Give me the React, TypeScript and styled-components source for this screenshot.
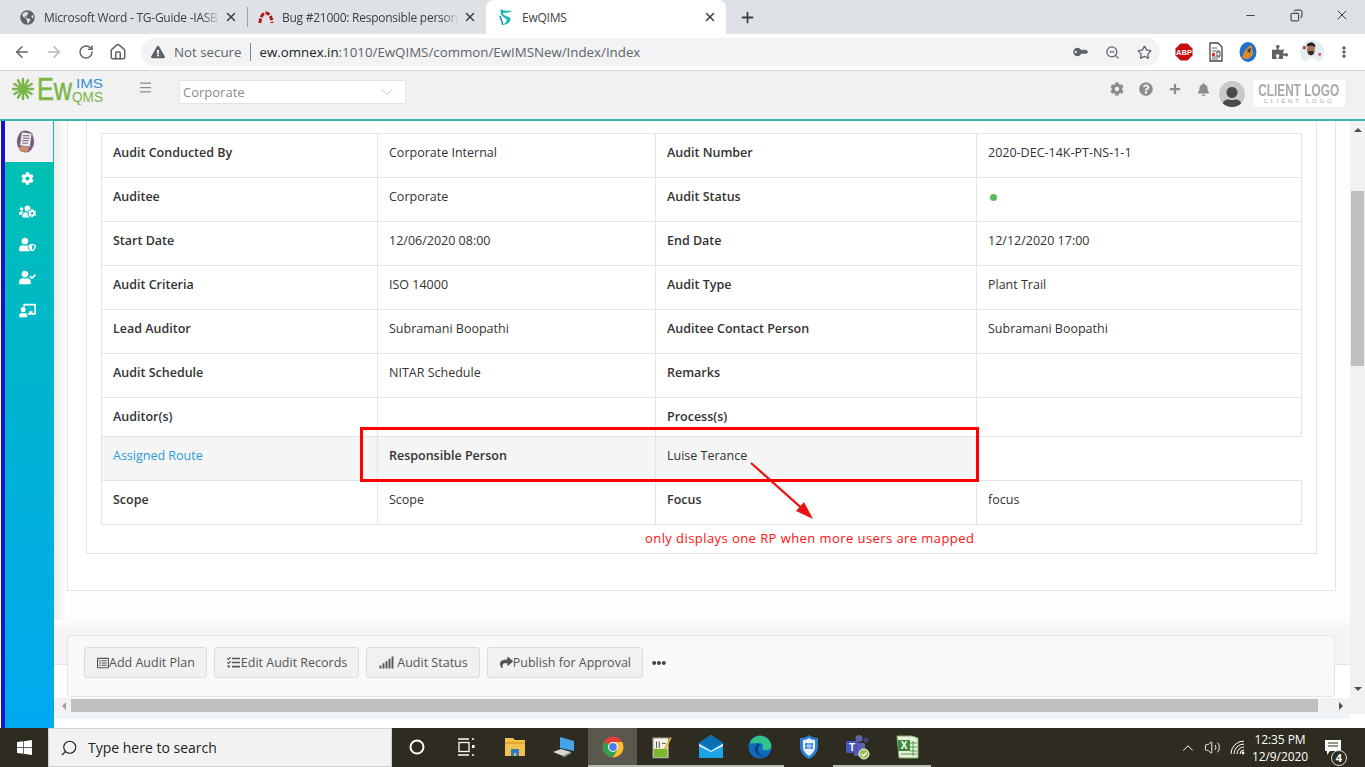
import React from 'react';
import styled, { createGlobalStyle } from 'styled-components';
import { ArrowLeft, ArrowRight, RotateCw, Home, X, Plus, Minus, Star, ZoomOut, Search, ChevronDown, ChevronUp, Menu, Copy, Volume2 } from 'lucide-react';
import {
  FaCog, FaQuestionCircle, FaPlus, FaBell, FaUsersCog, FaUserShield, FaUserCheck, FaChalkboardTeacher,
  FaTasks, FaSignal, FaShare, FaEllipsisH, FaRegListAlt, FaGlobeAmericas, FaKey, FaPuzzlePiece,
  FaExclamationTriangle, FaEllipsisV, FaUser, FaWindows,
} from 'react-icons/fa';

const GlobalStyle = createGlobalStyle`
  html, body {
    margin: 0;
    padding: 0;
    background: #fff;
    font-family: "Open Sans", "Liberation Sans", sans-serif;
  }
  * { box-sizing: border-box; }
`;

const Page = styled.div`
  width: 1365px;
  height: 767px;
  display: flex;
  flex-direction: column;
  overflow: hidden;
`;

/* browser chrome */
const TabStrip = styled.div`
  height: 34px;
  flex: none;
  background: #dee1e6;
  display: flex;
  align-items: stretch;
  padding-left: 9px;
  color: #3c4043;
`;

const Tab = styled.div<{ $active?: boolean; $width: number }>`
  width: ${({ $width }) => $width}px;
  display: flex;
  align-items: center;
  padding: 0 9px 0 ${({ $active }) => ($active ? 12 : 10)}px;
  background: ${({ $active }) => ($active ? '#fff' : 'transparent')};
  border-radius: ${({ $active }) => ($active ? '8px 8px 0 0' : '0')};
`;

const TabTitle = styled.span<{ $fade?: boolean }>`
  flex: 1;
  min-width: 0;
  margin-left: 8px;
  font-size: 12px;
  letter-spacing: -0.25px;
  white-space: nowrap;
  ${({ $fade }) => ($fade ? 'mask-image: linear-gradient(to right, #000 90%, transparent 100%);' : '')}
`;

const TabDivider = styled.div`
  width: 1px;
  height: 20px;
  align-self: center;
  background: #9aa0a6;
`;

const NewTab = styled.div`
  width: 42px;
  display: flex;
  align-items: center;
  justify-content: center;
`;

const WindowControls = styled.div`
  margin-left: auto;
  display: flex;
  align-items: flex-start;
`;

const WindowButton = styled.div`
  width: 46px;
  height: 30px;
  display: flex;
  align-items: center;
  justify-content: center;
  color: #111;
`;

const Toolbar = styled.div`
  height: 37px;
  flex: none;
  background: #fff;
  border-bottom: 1px solid #d6d6d6;
  display: flex;
  align-items: center;
  padding: 0 6px;
`;

const NavButton = styled.div<{ $muted?: boolean }>`
  width: 32px;
  height: 28px;
  flex: none;
  display: flex;
  align-items: center;
  justify-content: center;
  color: ${({ $muted }) => ($muted ? '#b3b6ba' : '#5f6368')};
`;

const Omnibox = styled.div`
  width: 1019px;
  height: 28px;
  margin: 0 8px 0 7px;
  flex: none;
  background: #f1f3f4;
  border-radius: 14px;
  display: flex;
  align-items: center;
  padding-left: 10px;
  font-size: 13.3px;
  color: #5f6368;
`;

const NotSecure = styled.span`
  margin-left: 9px;
`;

const UrlDivider = styled.span`
  width: 1px;
  height: 18px;
  margin: 0 8px 0 9px;
  background: #80868b;
`;

const UrlHost = styled.span`
  color: #202124;
`;

const OmniActions = styled.div`
  margin-left: auto;
  display: flex;
`;

/* application header */
const AppHeader = styled.header`
  height: 50px;
  flex: none;
  background: #f1f1f1;
  border-bottom: 2px solid #38b5a6;
  display: flex;
  align-items: center;
  padding: 0 20px 0 12px;
`;

const LogoMark = styled.svg`
  flex: none;
  margin-bottom: 4px;
  overflow: visible;
`;

const MenuButton = styled.div`
  margin: 0 0 16px 34px;
  color: #8a8a8a;
  display: flex;
`;

const CompanySelect = styled.div`
  width: 227px;
  height: 24px;
  margin: 0 0 7px 26px;
  background: #fff;
  border: 1px solid #e4e4e4;
  color: #8c8c8c;
  font-size: 13px;
  display: flex;
  align-items: center;
  justify-content: space-between;
  padding: 0 8px 0 3px;
`;

const HeaderActions = styled.div`
  margin-left: auto;
  display: flex;
  align-items: center;
`;

const HeaderIcon = styled.div`
  width: 29px;
  height: 20px;
  margin-bottom: 12px;
  color: #8c8c8c;
  display: flex;
  align-items: center;
  justify-content: center;
`;

const Avatar = styled.div`
  width: 26px;
  height: 26px;
  margin: 0 0 2px 1px;
  border-radius: 50%;
  background: #c9c9c9;
  color: #4a4a4a;
  overflow: hidden;
  display: flex;
  align-items: flex-end;
  justify-content: center;
`;

const ClientLogo = styled.div`
  width: 92px;
  height: 27px;
  margin: 0 0 3px 8px;
  background: #fff;
  color: #a8a8a8;
  display: flex;
  flex-direction: column;
  align-items: center;
  justify-content: center;
  line-height: 1;
  font-family: "Liberation Sans", sans-serif;
`;

const ClientTitle = styled.span`
  font-size: 16px;
  font-weight: 700;
  line-height: 14px;
  transform: scaleX(0.74);
  white-space: nowrap;
`;

const ClientSub = styled.span`
  font-size: 6px;
  letter-spacing: 2.8px;
  white-space: nowrap;
`;

/* main area */
const Main = styled.div`
  flex: 1;
  min-height: 0;
  display: flex;
`;

const Sidebar = styled.nav`
  width: 54px;
  flex: none;
  display: flex;
  flex-direction: column;
  padding-left: 1px;
  background: #fff;
`;

const SidebarInner = styled.div`
  flex: 1;
  border-left: 4px solid #1414cc;
  background: linear-gradient(to bottom, #00c2ae 0%, #00b4d0 45%, #00a9f0 100%);
`;

const SidebarActive = styled.div`
  height: 41px;
  padding-right: 8px;
  background: #f3f3f3;
  border-right: 1px solid #16bfae;
  display: flex;
  align-items: center;
  justify-content: center;
`;

const SidebarItem = styled.div`
  height: 33px;
  padding-right: 5px;
  color: #fff;
  display: flex;
  align-items: center;
  justify-content: center;
`;

const Workspace = styled.div`
  flex: 1;
  min-width: 0;
  display: flex;
`;

const LeftColumn = styled.div`
  flex: 1;
  min-width: 0;
  display: flex;
  flex-direction: column;
`;

const ScrollPane = styled.div`
  position: relative;
  flex: 1;
  min-height: 0;
  display: flex;
  flex-direction: column;
  background: linear-gradient(to right, #ececec 0, #fdfdfd 12px);
`;

const Card = styled.section`
  margin: 0 14px 0 13px;
  padding: 0 18px 36px;
  background: #fff;
  border: 1px solid #e4e4e4;
  border-top: none;
`;

const DetailBox = styled.div`
  padding: 12px 14px 28px;
  border: 1px solid #e4e4e4;
  border-top: none;
`;

const DetailTable = styled.table`
  width: 1200px;
  table-layout: fixed;
  border-collapse: collapse;
  font-size: 12.5px;
  color: #333;
`;

const Row = styled.tr<{ $height?: number; $tinted?: boolean }>`
  height: ${({ $height }) => $height ?? 44}px;
  background: ${({ $tinted }) => ($tinted ? '#f5f5f5' : '#fff')};
`;

const Cell = styled.td<{ $width?: number; $label?: boolean; $open?: boolean }>`
  ${({ $width }) => ($width ? `width: ${$width}px;` : '')}
  padding: 10px 11px 0;
  vertical-align: top;
  line-height: 18px;
  border: 1px solid #e4e4e4;
  font-weight: ${({ $label }) => ($label ? 600 : 400)};
  ${({ $open }) => ($open ? 'background: #fff; border-right-color: #fff;' : '')}
`;

const RouteLink = styled.a`
  color: #2a9be0;
`;

const StatusDot = styled.span`
  display: inline-block;
  width: 7px;
  height: 7px;
  margin-left: 2px;
  border-radius: 50%;
  background: #5cb85c;
`;

const FooterBand = styled.div`
  margin-top: auto;
  padding: 15px 15px 1px 13px;
  background: linear-gradient(to bottom, #fdfdfd 0, #f5f5f5 8px, #f5f5f5 44px, #e4e4e4 44px, #e4e4e4 45px, #fff 45px);
`;

const ActionPanel = styled.div`
  height: 62px;
  background: #f9f9f9;
  border: 1px solid #e4e4e4;
  border-radius: 3px;
  display: flex;
  align-items: center;
  gap: 7px;
  padding: 0 0 7px 16px;
`;

const ActionButton = styled.button<{ $gap?: number }>`
  height: 31px;
  padding: 0 11px 0 12px;
  background: #f1f1f1;
  border: 1px solid #dcdcdc;
  border-radius: 3px;
  color: #555;
  font-family: "Open Sans", sans-serif;
  font-size: 12.5px;
  display: flex;
  align-items: center;
  gap: ${({ $gap }) => $gap ?? 0}px;
`;

const MoreButton = styled.div`
  margin-left: 2px;
  color: #444;
  display: flex;
`;

const HorizontalBar = styled.div`
  height: 15px;
  flex: none;
  background: #f1f1f1;
  display: flex;
  align-items: center;
  padding: 0 7px 0 8px;
`;

const HorizontalThumb = styled.div`
  flex: 1;
  height: 13px;
  margin: 0 21px 0 5px;
  background: #bfbfbf;
`;

const BottomGap = styled.div`
  height: 15px;
  flex: none;
  background: linear-gradient(to bottom, #eef3f7 0, #eef3f7 6px, #fff 6px);
`;

const RightColumn = styled.div`
  width: 15px;
  flex: none;
  display: flex;
  flex-direction: column;
  background: #fff;
`;

const VerticalBar = styled.div`
  height: 593px;
  background: #f1f1f1;
  display: flex;
  flex-direction: column;
  align-items: center;
  padding-top: 3px;
  color: #505050;
`;

const VerticalThumb = styled.div`
  width: 13px;
  height: 175px;
  margin: 55px 0 auto;
  background: #bfbfbf;
`;

const Triangle = styled.span<{ $dir: 'up' | 'down' | 'left' | 'right' }>`
  width: 0;
  height: 0;
  flex: none;
  ${({ $dir }) =>
    $dir === 'up'
      ? 'border-left: 4px solid transparent; border-right: 4px solid transparent; border-bottom: 4px solid #505050; margin: 4px 0;'
      : $dir === 'down'
        ? 'border-left: 4px solid transparent; border-right: 4px solid transparent; border-top: 4px solid #505050; margin-bottom: 23px;'
        : $dir === 'left'
          ? 'border-top: 4px solid transparent; border-bottom: 4px solid transparent; border-right: 4px solid #a0a0a0;'
          : 'border-top: 4px solid transparent; border-bottom: 4px solid transparent; border-left: 4px solid #505050;'}
`;

/* annotations drawn over the page */
const HighlightBox = styled.div`
  position: absolute;
  left: 306px;
  top: 306px;
  width: 619px;
  height: 55px;
  border: 3px solid #ff0000;
  pointer-events: none;
`;

const ArrowOverlay = styled.svg`
  position: absolute;
  left: 690px;
  top: 336px;
`;

const Note = styled.span`
  position: absolute;
  left: 591px;
  top: 408px;
  font-size: 13px;
  letter-spacing: 0.43px;
  color: #ff1010;
  white-space: nowrap;
`;

/* windows taskbar */
const Taskbar = styled.footer`
  height: 39px;
  flex: none;
  background: #2e2b21;
  display: flex;
  align-items: stretch;
  color: #fff;
`;

const StartButton = styled.div`
  width: 48px;
  display: flex;
  align-items: center;
  justify-content: center;
`;

const SearchBox = styled.div`
  width: 344px;
  background: #f2f2f2;
  border: 1px solid #d0d0d0;
  color: #222;
  display: flex;
  align-items: center;
  padding-left: 11px;
  font-size: 14px;
  gap: 10px;
`;

const TaskButton = styled.div<{ $active?: boolean; $running?: boolean }>`
  width: 49px;
  position: relative;
  display: flex;
  align-items: center;
  justify-content: center;
  background: ${({ $active }) => ($active ? '#5a584c' : 'transparent')};
  border-bottom: 2px solid ${({ $running }) => ($running ? '#b8b8b4' : 'transparent')};
`;

const Tray = styled.div`
  margin-left: auto;
  display: flex;
  align-items: center;
  padding-right: 11px;
`;

const TrayIcon = styled.div`
  width: 25px;
  display: flex;
  justify-content: center;
`;

const Clock = styled.div`
  width: 64px;
  margin-left: -2px;
  text-align: center;
  font-size: 12px;
  letter-spacing: -0.1px;
  line-height: 17px;
`;

const Notifications = styled.div`
  position: relative;
  width: 42px;
  height: 100%;
  display: flex;
  align-items: center;
  justify-content: center;
`;

const NotifBadge = styled.span`
  position: absolute;
  right: 7px;
  bottom: 1px;
  width: 16px;
  height: 16px;
  border-radius: 50%;
  background: #2e2b21;
  border: 1px solid #ddd;
  font-size: 11px;
  font-weight: 700;
  line-height: 14px;
  text-align: center;
`;

const Logo = () => (
  <LogoMark width="92" height="36" viewBox="0 0 92 36">
    <g stroke="#7ab648" strokeWidth="2.4" strokeLinecap="round" transform="translate(11 14)">
      {[0, 30, 60, 90, 120, 150].map(a => (
        <line key={a} x1="-10" y1="0" x2="10" y2="0" transform={`rotate(${a})`} />
      ))}
      <circle r="3.6" fill="#7ab648" stroke="none" />
    </g>
    <text x="25" y="25" fontFamily="Liberation Sans" fontSize="31" stroke="#7ab648" strokeWidth="0.5" fill="#7ab648" textLength="35" lengthAdjust="spacingAndGlyphs">Ew</text>
    <text x="64" y="13" fontFamily="Liberation Sans" fontSize="13" fill="#3b8fcb" textLength="27" lengthAdjust="spacingAndGlyphs">IMS</text>
    <text x="60" y="27" fontFamily="Liberation Sans" fontSize="14" fill="#7ab648" textLength="31" lengthAdjust="spacingAndGlyphs">QMS</text>
  </LogoMark>
);

const RedmineIcon = () => (
  <svg width="16" height="16" viewBox="0 0 16 16" style={{ flex: 'none' }}>
    <path d="M2 14 A6 10 0 0 1 14 14" fill="none" stroke="#b3141c" strokeWidth="3" strokeDasharray="4.5 1.5" />
  </svg>
);

const QimsIcon = () => (
  <svg width="16" height="18" viewBox="0 0 16 18" style={{ flex: 'none' }}>
    <path d="M3 1 C6 4 12 2 14 3 C10 5 7 5 5 5 C5 8 10 8 12 10 C14 13 9 17 5 17 C8 14 10 13 8 11 C5 9 1 6 3 1Z" fill="#18b7b0" />
    <path d="M2 8 C3 11 4 14 5 17" fill="none" stroke="#1d7fd0" strokeWidth="1.4" />
  </svg>
);

const AuditIcon = () => (
  <svg width="19" height="23" viewBox="0 0 22 28">
    <ellipse cx="11" cy="14" rx="10.5" ry="13.5" fill="#7a5c84" />
    <rect x="5" y="3" width="13" height="17" fill="#efeef0" stroke="#6a5a70" transform="rotate(8 11 11)" />
    <path d="M8 7h8M8 10h8M7 13h8M7 16h7" stroke="#6a5a70" strokeWidth="1.2" />
    <ellipse cx="9" cy="23" rx="6" ry="3.5" fill="#c98f6e" />
  </svg>
);

const AbpIcon = () => (
  <svg width="18" height="18" viewBox="0 0 18 18">
    <path d="M5.5 0.5h7l5 5v7l-5 5h-7l-5-5v-7z" fill="#c70d0d" />
    <text x="9" y="12" textAnchor="middle" fontFamily="Liberation Sans" fontSize="7.5" fontWeight="700" fill="#fff">ABP</text>
  </svg>
);

const DocIcon = () => (
  <svg width="14" height="20" viewBox="0 0 14 20">
    <path d="M1 1h8l4 4v14H1z" fill="#fff" stroke="#444" strokeWidth="1.3" />
    <path d="M3 6h5M3 9h8M3 15h8M3 17h6" stroke="#666" />
    <rect x="3" y="11" width="3" height="3" fill="#d33" />
    <rect x="8" y="10" width="3" height="4" fill="none" stroke="#555" />
  </svg>
);

const OrbIcon = () => (
  <svg width="18" height="20" viewBox="0 0 18 20">
    <ellipse cx="9" cy="10" rx="8.5" ry="10" fill="#1c6fd1" />
    <path d="M3 16 C5 8 9 4 13 3 C12 7 15 9 14 12 C12 17 7 18 3 16Z" fill="#d98a2b" />
    <path d="M8 9 C9 7 11 6 12 6 L11 11 Z" fill="#3a3a3a" />
  </svg>
);

const ProfileIcon = () => (
  <svg width="24" height="24" viewBox="0 0 22 22">
    <circle cx="11" cy="11" r="11" fill="#e3eef0" />
    <path d="M5 22 C5 15 17 15 17 22Z" fill="#fff" />
    <ellipse cx="10" cy="9" rx="3.6" ry="5" fill="#a8745c" />
    <path d="M6 6 C6 1 15 1 14 7 C12 5 9 5 6 6Z" fill="#2c1e1c" />
    <path d="M7 11 C8 15 12 15 13 11 L12 10 H8Z" fill="#3a2a26" />
    <circle cx="4" cy="7" r="1.6" fill="#c03a55" />
    <circle cx="18" cy="13" r="1.4" fill="#d05a70" />
  </svg>
);

const WifiIcon = () => (
  <svg width="15" height="15" viewBox="0 0 15 15" fill="none" stroke="#fff" strokeWidth="1">
    <path d="M1 14 A13 13 0 0 1 14 1" />
    <path d="M4 14 A10 10 0 0 1 14 4" />
    <path d="M7 14 A7 7 0 0 1 14 7" />
    <path d="M10 14 A4 4 0 0 1 14 10" />
    <circle cx="13" cy="13" r="1.4" fill="#fff" stroke="none" />
  </svg>
);

const CortanaIcon = () => (
  <svg width="16" height="16" viewBox="0 0 16 16">
    <circle cx="8" cy="8" r="6.5" fill="none" stroke="#fff" strokeWidth="2" />
  </svg>
);

const TaskViewIcon = () => (
  <svg width="18" height="18" viewBox="0 0 18 18" fill="none" stroke="#fff" strokeWidth="1.3">
    <path d="M1 1h11M1 17h11M15 1h2M15 17h2" />
    <rect x="2" y="4.5" width="10" height="9" />
    <rect x="15" y="7" width="2.5" height="3" fill="#fff" stroke="none" />
  </svg>
);

const ExplorerIcon = () => (
  <svg width="22" height="20" viewBox="0 0 22 20">
    <path d="M1 1h8l2 2h10v16H1z" fill="#f2c14e" />
    <path d="M1 5h20v2H1z" fill="#e2a82e" />
    <path d="M7 19v-7h8v7h-3v-3h-2v3z" fill="#2f78c4" />
  </svg>
);

const ComputerIcon = () => (
  <svg width="24" height="22" viewBox="0 0 24 22">
    <path d="M8 1l14 4v10L8 12z" fill="#42a5e8" />
    <path d="M1 16l8-3 10 3-8 4z" fill="#d8d8d8" />
    <path d="M11 20l8-4v1.5L11 21.5z" fill="#9a9a9a" />
  </svg>
);

const ChromeIcon = () => (
  <svg width="22" height="22" viewBox="0 0 22 22">
    <circle cx="11" cy="11" r="10.5" fill="#e34133" />
    <path d="M11 11 L2 5.8 A10.5 10.5 0 0 0 11 21.5 L16.2 12.5Z" fill="#2f9e4f" />
    <path d="M11 6 H20.2 A10.5 10.5 0 0 1 11 21.5 L16 12.5Z" fill="#fbc02d" />
    <circle cx="11" cy="11" r="5" fill="#fff" />
    <circle cx="11" cy="11" r="3.9" fill="#4a80e8" />
  </svg>
);

const NotepadIcon = () => (
  <svg width="20" height="26" viewBox="0 0 22 26">
    <rect x="1" y="3" width="17" height="22" fill="#f2f2e8" stroke="#888" />
    <rect x="2" y="15" width="15" height="9" fill="#7cb82f" />
    <path d="M5 7v7M8 7v7M11 9h4" stroke="#444" />
    <path d="M13 15L20 2l1.5 1L15 16z" fill="#f0b429" />
  </svg>
);

const MailIcon = () => (
  <svg width="24" height="24" viewBox="0 0 24 24">
    <path d="M0 8L12 0l12 8v15H0z" fill="#19a5e6" />
    <path d="M0 8L12 0l12 8-12 7z" fill="#0b6fb8" />
    <path d="M0 9l12 7 12-7v2l-12 6-12-6z" fill="#fff" />
  </svg>
);

const EdgeIcon = () => (
  <svg width="24" height="24" viewBox="0 0 24 24">
    <circle cx="12" cy="12" r="11.5" fill="#0f6cbd" />
    <path d="M2 8C4 2 10 0 14 1c6 1 10 6 9 12-2 3-8 3-9 0 2-1 1-5-3-5-5 0-9 1-9 0z" fill="#31c48d" />
    <path d="M12 9c-4 0-6 3-5 7 1 3 5 6 10 5-4 0-8-3-7-7 0-2 1-4 2-5z" fill="#0a3f7a" />
  </svg>
);

const ShieldIcon = () => (
  <svg width="20" height="24" viewBox="0 0 20 24">
    <path d="M1 3 C5 3 8 2 10 0 C12 2 15 3 19 3 V12 C19 18 14 22 10 24 C6 22 1 18 1 12Z" fill="#2f7fd6" />
    <path d="M4 5 C6 5 8 4.4 10 3 C12 4.4 14 5 16 5 V12 C16 16 13 19 10 21 C7 19 4 16 4 12Z" fill="#eaf3fc" />
    <rect x="6" y="8" width="8" height="6" rx="1" fill="#2f7fd6" />
    <path d="M6 11h8M9 8v6M11 8v6" stroke="#eaf3fc" strokeWidth="0.8" />
  </svg>
);

const TeamsIcon = () => (
  <svg width="26" height="26" viewBox="0 0 26 26">
    <circle cx="14" cy="4.5" r="3.5" fill="#6264a7" />
    <circle cx="21" cy="6" r="2.6" fill="#464775" />
    <rect x="9" y="9" width="11" height="13" rx="1.5" fill="#6264a7" />
    <rect x="1" y="7" width="12" height="12" rx="1" fill="#4b53bc" />
    <text x="7" y="16.5" textAnchor="middle" fontFamily="Liberation Sans" fontSize="10" fontWeight="700" fill="#fff">T</text>
    <circle cx="19" cy="20" r="5" fill="#92c353" stroke="#fff" />
    <path d="M16.5 20l2 2 3.2-3.5" fill="none" stroke="#fff" strokeWidth="1.3" />
  </svg>
);

const ExcelIcon = () => (
  <svg width="24" height="24" viewBox="0 0 24 24">
    <path d="M2 1h15l6 2v20H4z" fill="#e8f1df" stroke="#7fb069" />
    <rect x="3" y="5" width="12" height="11" fill="#3c8a3a" />
    <text x="9" y="14" textAnchor="middle" fontFamily="Liberation Sans" fontSize="10" fontWeight="700" fill="#fff">X</text>
    <path d="M15 8h7M15 12h7M15 16h7M18 6v15M6 19h16" stroke="#5a9a4c" />
  </svg>
);

type DetailRow = [string, React.ReactNode, string, React.ReactNode];

const detailRows: DetailRow[] = [
  ['Audit Conducted By', 'Corporate Internal', 'Audit Number', '2020-DEC-14K-PT-NS-1-1'],
  ['Auditee', 'Corporate', 'Audit Status', <StatusDot key="dot" />],
  ['Start Date', '12/06/2020 08:00', 'End Date', '12/12/2020 17:00'],
  ['Audit Criteria', 'ISO 14000', 'Audit Type', 'Plant Trail'],
  ['Lead Auditor', 'Subramani Boopathi', 'Auditee Contact Person', 'Subramani Boopathi'],
  ['Audit Schedule', 'NITAR Schedule', 'Remarks', ''],
];

const columnWidths = [276, 278, 321, 325];

export default function App() {
  return (
    <Page>
      <GlobalStyle />
      <TabStrip>
        <Tab $width={238}>
          <FaGlobeAmericas size={15} color="#5f6368" style={{ flex: 'none', margin: '0 1px' }} />
          <TabTitle $fade>Microsoft Word - TG-Guide -IASB</TabTitle>
          <X size={14} strokeWidth={2.5} style={{ flex: 'none', marginLeft: 4 }} />
        </Tab>
        <TabDivider />
        <Tab $width={238}>
          <RedmineIcon />
          <TabTitle $fade>Bug #21000: Responsible person</TabTitle>
          <X size={14} strokeWidth={2.5} style={{ flex: 'none', marginLeft: 4 }} />
        </Tab>
        <Tab $active $width={240}>
          <QimsIcon />
          <TabTitle>EwQIMS</TabTitle>
          <X size={14} strokeWidth={2.5} style={{ flex: 'none' }} />
        </Tab>
        <NewTab>
          <Plus size={17} strokeWidth={2.5} />
        </NewTab>
        <WindowControls>
          <WindowButton><Minus size={13} strokeWidth={1.4} /></WindowButton>
          <WindowButton><Copy size={13} strokeWidth={1.6} style={{ transform: 'scaleX(-1)' }} /></WindowButton>
          <WindowButton><X size={16} strokeWidth={1.2} /></WindowButton>
        </WindowControls>
      </TabStrip>

      <Toolbar>
        <NavButton><ArrowLeft size={18} strokeWidth={2} /></NavButton>
        <NavButton $muted><ArrowRight size={18} strokeWidth={2} /></NavButton>
        <NavButton><RotateCw size={16} strokeWidth={2.2} /></NavButton>
        <NavButton><Home size={18} strokeWidth={2} /></NavButton>
        <Omnibox>
          <FaExclamationTriangle size={14} />
          <NotSecure>Not secure</NotSecure>
          <UrlDivider />
          <span><UrlHost>ew.omnex.in</UrlHost>:1010/EwQIMS/common/EwIMSNew/Index/Index</span>
          <OmniActions>
            <NavButton><FaKey size={12} style={{ transform: 'rotate(-135deg)' }} /></NavButton>
            <NavButton><ZoomOut size={15} /></NavButton>
            <NavButton><Star size={15} strokeWidth={2} /></NavButton>
          </OmniActions>
        </Omnibox>
        <NavButton><AbpIcon /></NavButton>
        <NavButton><DocIcon /></NavButton>
        <NavButton><OrbIcon /></NavButton>
        <NavButton><FaPuzzlePiece size={16} /></NavButton>
        <NavButton><ProfileIcon /></NavButton>
        <NavButton><FaEllipsisV size={12} /></NavButton>
      </Toolbar>

      <AppHeader>
        <Logo />
        <MenuButton><Menu size={15} strokeWidth={2} /></MenuButton>
        <CompanySelect>
          Corporate
          <ChevronDown size={20} strokeWidth={1} color="#b5b5b5" />
        </CompanySelect>
        <HeaderActions>
          <HeaderIcon><FaCog size={14} /></HeaderIcon>
          <HeaderIcon><FaQuestionCircle size={14} /></HeaderIcon>
          <HeaderIcon><FaPlus size={12} /></HeaderIcon>
          <HeaderIcon><FaBell size={13} /></HeaderIcon>
          <Avatar><FaUser size={22} style={{ marginBottom: -2 }} /></Avatar>
        </HeaderActions>
        <ClientLogo>
          <ClientTitle>CLIENT LOGO</ClientTitle>
          <ClientSub>CLIENT LOGO</ClientSub>
        </ClientLogo>
      </AppHeader>

      <Main>
        <Sidebar>
          <SidebarInner>
            <SidebarActive><AuditIcon /></SidebarActive>
            <SidebarItem><FaCog size={13} /></SidebarItem>
            <SidebarItem><FaUsersCog size={17} /></SidebarItem>
            <SidebarItem><FaUserShield size={17} /></SidebarItem>
            <SidebarItem><FaUserCheck size={17} /></SidebarItem>
            <SidebarItem><FaChalkboardTeacher size={17} /></SidebarItem>
          </SidebarInner>
        </Sidebar>

        <Workspace>
          <LeftColumn>
            <ScrollPane>
              <Card>
                <DetailBox>
                  <DetailTable>
                    <tbody>
                      {detailRows.map(([a, b, c, d], i) => (
                        <Row key={a}>
                          <Cell $label $width={i === 0 ? columnWidths[0] : undefined}>{a}</Cell>
                          <Cell $width={i === 0 ? columnWidths[1] : undefined}>{b}</Cell>
                          <Cell $label $width={i === 0 ? columnWidths[2] : undefined}>{c}</Cell>
                          <Cell $width={i === 0 ? columnWidths[3] : undefined}>{d}</Cell>
                        </Row>
                      ))}
                      <Row $height={39}>
                        <Cell $label>Auditor(s)</Cell>
                        <Cell />
                        <Cell $label>Process(s)</Cell>
                        <Cell />
                      </Row>
                      <Row $tinted>
                        <Cell><RouteLink>Assigned Route</RouteLink></Cell>
                        <Cell $label>Responsible Person</Cell>
                        <Cell>Luise Terance</Cell>
                        <Cell $open />
                      </Row>
                      <Row>
                        <Cell $label>Scope</Cell>
                        <Cell>Scope</Cell>
                        <Cell $label>Focus</Cell>
                        <Cell>focus</Cell>
                      </Row>
                    </tbody>
                  </DetailTable>
                </DetailBox>
              </Card>

              <FooterBand>
                <ActionPanel>
                  <ActionButton><FaRegListAlt size={12} />Add Audit Plan</ActionButton>
                  <ActionButton $gap={1}><FaTasks size={13} />Edit Audit Records</ActionButton>
                  <ActionButton $gap={3}><FaSignal size={15} />Audit Status</ActionButton>
                  <ActionButton><FaShare size={13} />Publish for Approval</ActionButton>
                  <MoreButton><FaEllipsisH size={14} /></MoreButton>
                </ActionPanel>
              </FooterBand>

              <HighlightBox />
              <ArrowOverlay width="80" height="70" viewBox="0 0 80 70">
                <path d="M7 6 L62 55" stroke="#ee1111" strokeWidth="2.2" />
                <path d="M69 62 L52 54 L60 45 Z" fill="#ee1111" />
              </ArrowOverlay>
              <Note>only displays one RP when more users are mapped</Note>
            </ScrollPane>
            <HorizontalBar>
              <Triangle $dir="left" />
              <HorizontalThumb />
              <Triangle $dir="right" />
            </HorizontalBar>
            <BottomGap />
          </LeftColumn>
          <RightColumn>
            <VerticalBar>
              <Triangle $dir="up" />
              <VerticalThumb />
              <Triangle $dir="down" />
            </VerticalBar>
          </RightColumn>
        </Workspace>
      </Main>

      <Taskbar>
        <StartButton><FaWindows size={17} /></StartButton>
        <SearchBox>
          <Search size={18} strokeWidth={1.5} style={{ transform: 'scaleX(-1)' }} />
          Type here to search
        </SearchBox>
        <TaskButton><CortanaIcon /></TaskButton>
        <TaskButton><TaskViewIcon /></TaskButton>
        <TaskButton><ExplorerIcon /></TaskButton>
        <TaskButton><ComputerIcon /></TaskButton>
        <TaskButton $active $running><ChromeIcon /></TaskButton>
        <TaskButton $running><NotepadIcon /></TaskButton>
        <TaskButton $running><MailIcon /></TaskButton>
        <TaskButton $running><EdgeIcon /></TaskButton>
        <TaskButton><ShieldIcon /></TaskButton>
        <TaskButton $running><TeamsIcon /></TaskButton>
        <TaskButton $running><ExcelIcon /></TaskButton>
        <Tray>
          <TrayIcon><ChevronUp size={18} strokeWidth={1.3} /></TrayIcon>
          <TrayIcon><Volume2 size={17} strokeWidth={1.3} /></TrayIcon>
          <TrayIcon><WifiIcon /></TrayIcon>
          <Clock>12:35 PM<br />12/9/2020</Clock>
          <Notifications>
            <svg width="18" height="17" viewBox="0 0 18 17">
              <path d="M1 1h16v11H6l-3 4v-4H1z" fill="#fff" />
              <path d="M4 4h10M4 7h10" stroke="#2e2b21" />
            </svg>
            <NotifBadge>4</NotifBadge>
          </Notifications>
        </Tray>
      </Taskbar>
    </Page>
  );
}
